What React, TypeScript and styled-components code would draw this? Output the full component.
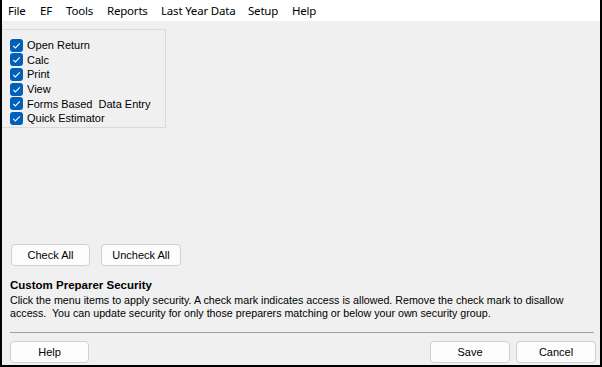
import styled, { createGlobalStyle } from "styled-components"

const GlobalStyle = createGlobalStyle`
  html, body {
    margin: 0;
    padding: 0;
    background: #f0f0f0;
  }
  #root {
    height: 367px;
  }
`

const Window = styled.div`
  box-sizing: border-box;
  width: 602px;
  height: 367px;
  display: flex;
  flex-direction: column;
  background: #f0f0f0;
  border-left: 2px solid #000;
  border-right: 2px solid #000;
  border-bottom: 2px solid #000;
  font-family: "Liberation Sans", Arial, sans-serif;
  font-size: 11px;
  color: #000;
`

const MenuBar = styled.div`
  height: 21px;
  display: flex;
  align-items: center;
  background: #fff;
  padding-left: 6px;
  font-family: "Noto Sans", "Liberation Sans", sans-serif;
  font-size: 11.5px;
  letter-spacing: -0.2px;
`

const MenuItem = styled.span<{ $w: number }>`
  width: ${(p) => p.$w}px;
  white-space: nowrap;
`

const Panel = styled.div`
  box-sizing: border-box;
  margin-top: 8px;
  width: 164px;
  height: 99px;
  border: 1px solid #dadada;
  border-left: none;
  padding: 8px 0 0 8px;
  display: flex;
  flex-direction: column;
`

const Row = styled.label`
  height: 14.6px;
  display: flex;
  align-items: center;
  gap: 4px;
  white-space: pre;
`

const Box = styled.svg`
  width: 13px;
  height: 13px;
  flex: none;
`

const Spacer = styled.div`
  flex: 1;
`

const ButtonRow = styled.div`
  display: flex;
  gap: 11px;
  padding-left: 9px;
`

const Button = styled.button<{ $w?: number }>`
  box-sizing: border-box;
  width: ${(p) => p.$w ?? 79}px;
  height: 22px;
  padding: 0;
  background: #fdfdfd;
  border: 1px solid #d0d0d0;
  border-radius: 4px;
  font-family: "Liberation Sans", Arial, sans-serif;
  font-size: 11px;
  color: #000;
`

const Info = styled.div`
  padding: 12px 8px 0 8px;
`

const Title = styled.div`
  font-weight: bold;
  font-size: 11.5px;
  line-height: 14px;
`

const Para = styled.p`
  margin: 2px 0 0;
  width: 570px;
  font-size: 10.7px;
  line-height: 13px;
`

const Divider = styled.hr`
  margin: 12px 6px 0 8px;
  border: none;
  border-top: 1px solid #a0a0a0;
`

const Footer = styled.div`
  display: flex;
  gap: 6px;
  padding: 8px 4px 2px 8px;
`

const Gap = styled.div`
  flex: 1;
`

function Check() {
  return (
    <Box viewBox="0 0 13 13">
      <rect x="0" y="0" width="13" height="13" rx="3" fill="#005fb8" />
      <path d="M3.2 6.8 L5.4 9 L9.8 4.4" fill="none" stroke="#fff" strokeWidth="1.1" />
    </Box>
  )
}

const menus: [string, number][] = [
  ["File", 32],
  ["EF", 26],
  ["Tools", 41],
  ["Reports", 54],
  ["Last Year Data", 87],
  ["Setup", 44],
  ["Help", 30],
]

const items = ["Open Return", "Calc", "Print", "View", "Forms Based  Data Entry", "Quick Estimator"]

export default function App() {
  return (
    <>
      <GlobalStyle />
      <Window>
        <MenuBar>
          {menus.map(([m, w]) => (
            <MenuItem key={m} $w={w}>
              {m}
            </MenuItem>
          ))}
        </MenuBar>
        <Panel>
          {items.map((it) => (
            <Row key={it}>
              <Check />
              {it}
            </Row>
          ))}
        </Panel>
        <Spacer />
        <ButtonRow>
          <Button>Check All</Button>
          <Button $w={80}>Uncheck All</Button>
        </ButtonRow>
        <Info>
          <Title>Custom Preparer Security</Title>
          <Para>
            Click the menu items to apply security. A check mark indicates access is allowed. Remove the check mark to
            disallow access.&nbsp; You can update security for only those preparers matching or below your own security
            group.
          </Para>
        </Info>
        <Divider />
        <Footer>
          <Button>Help</Button>
          <Gap />
          <Button $w={80}>Save</Button>
          <Button $w={80}>Cancel</Button>
        </Footer>
      </Window>
    </>
  )
}
